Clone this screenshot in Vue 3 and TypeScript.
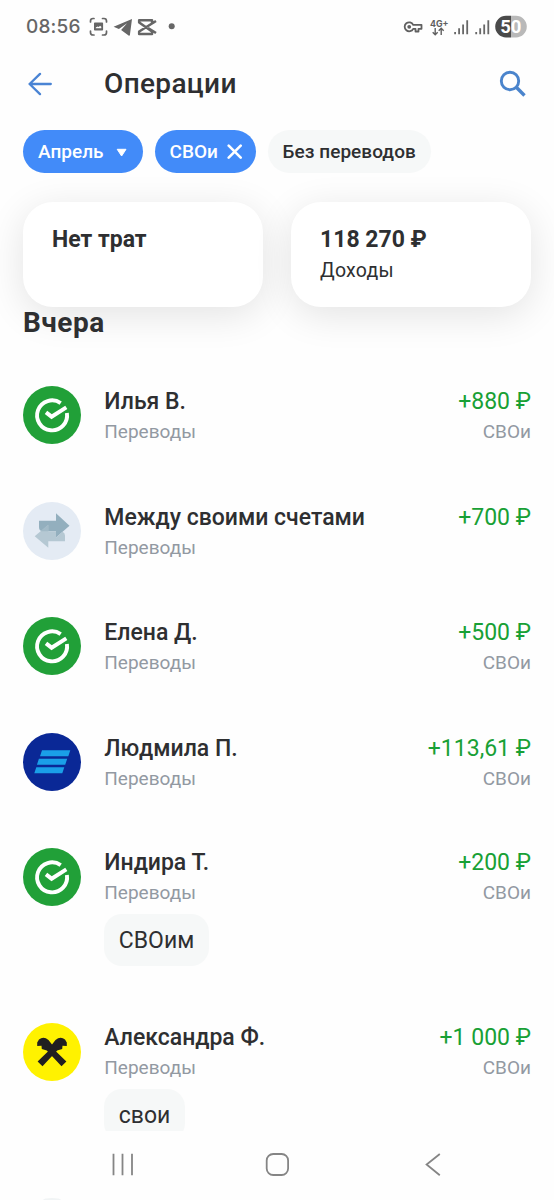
<script setup lang="ts">
type Bank = 'sber' | 'own' | 'vtb' | 'raif'

interface Operation {
  id: number
  bank: Bank
  name: string
  category: string
  amount: string
  label?: string
  note?: string
}

const operations: Operation[] = [
  { id: 1, bank: 'sber', name: 'Илья В.', category: 'Переводы', amount: '+880 ₽', label: 'СВОи' },
  { id: 2, bank: 'own', name: 'Между своими счетами', category: 'Переводы', amount: '+700 ₽' },
  { id: 3, bank: 'sber', name: 'Елена Д.', category: 'Переводы', amount: '+500 ₽', label: 'СВОи' },
  { id: 4, bank: 'vtb', name: 'Людмила П.', category: 'Переводы', amount: '+113,61 ₽', label: 'СВОи' },
  { id: 5, bank: 'sber', name: 'Индира Т.', category: 'Переводы', amount: '+200 ₽', label: 'СВОи', note: 'СВОим' },
  { id: 6, bank: 'raif', name: 'Александра Ф.', category: 'Переводы', amount: '+1 000 ₽', label: 'СВОи', note: 'свои' },
]
</script>

<template>
  <div class="screen">
    <div class="status">
      <span class="time">08:56</span>
      <svg class="status-left" width="90" height="22" viewBox="0 0 90 22">
        <g fill="none" stroke="#666" stroke-width="1.7" stroke-linecap="round">
          <path d="M1.5 6V5q0-2.500 2.500-2.500h1M13.500 2.500h1.500q2.500 0 2.500 2.500v1M17.500 15v1.500q0 2.500-2.500 2.500h-1.500M5 19H4q-2.500 0-2.500-2.500V15" />
        </g>
        <path fill="#666" fill-rule="evenodd" d="M5.800 6.500h7.500q.8 0 .8.8v6.400q0 .8-.8.8H5.800q-.8 0-.8-.8V7.300q0-.8.8-.8zM6.800 12.300h5.500v-1.500l-1.300-1-1.200 1.300-1.200-.6-1.800 1z" />
        <path fill="#666" d="M43 3 24.600 10.800l5.300 2.100 8.200-5.600-6 6.600 7.500 5.600q1 .6 1.300-.6z" />
        <path fill="none" stroke="#666" stroke-width="2.600" stroke-linejoin="round" d="M67 5 50.200 15.500V18H63V15.500L50.200 6.500V4.300H63V6.500M59 12l8 5" />
        <circle cx="82.700" cy="10.300" r="3" fill="#666" />
      </svg>
      <svg class="status-right" width="126" height="24" viewBox="0 0 126 24">
        <g fill="none" stroke="#606060" stroke-width="1.800" stroke-linejoin="round">
          <path d="M11.200 9.800A4.500 4.500 0 1 0 11.200 13.800H13.500V16.500H16.500V13.800H19.500V9.800z" />
          <circle cx="7.200" cy="11.800" r="1" />
        </g>
        <text x="28" y="11.500" class="net">4G+</text>
        <path fill="none" stroke="#606060" stroke-width="1.400" d="M33.200 13v6.500M30.700 17.200l2.500 2.500 2.500-2.500M39.200 20V13.500M36.700 15.800l2.500-2.500 2.500 2.500" />
        <g fill="#686868">
          <path d="M52.200 17H54v2.200h-1.800zM56.200 13.200H58v6h-1.800zM60.200 9.500H62v9.700h-1.800zM64.300 5.200h1.800v14h-1.800z" />
          <path d="M73.300 17h1.800v2.200h-1.800zM77.300 13.200h1.800v6h-1.800zM81.300 9.500h1.800v9.700h-1.800zM85.400 5.200h1.800v14h-1.800z" />
        </g>
        <path fill="#4a4a4a" d="M109 .8h-5a10.800 10.800 0 0 0 0 21.600h5z" />
        <path fill="#b9b9b9" d="M109 .8h5a10.800 10.800 0 0 1 0 21.600h-5z" />
        <text x="108.800" y="17.800" text-anchor="middle" class="battery">50</text>
      </svg>
    </div>

    <header class="header">
      <svg class="back" width="24" height="24" viewBox="0 0 24 24">
        <path fill="none" stroke="#4a84d4" stroke-width="2.300" stroke-linecap="round" stroke-linejoin="round" d="M22.800 12H1.600M12 1.900 1.600 12 12 22.100" />
      </svg>
      <h1 class="title">Операции</h1>
      <svg class="search" width="28" height="28" viewBox="0 0 28 28">
        <circle cx="11" cy="11" r="8.700" fill="none" stroke="#4a84cc" stroke-width="2.900" />
        <path d="m17.300 17.300 8.200 8.200" fill="none" stroke="#4a84cc" stroke-width="3.400" />
      </svg>
    </header>

    <div class="chips">
      <div class="chip month">
        <span>Апрель</span>
        <svg width="12" height="10" viewBox="0 0 12 10"><path fill="#fff" stroke="#fff" stroke-linejoin="round" d="M1.200 2.300h8.800L5.600 9z" /></svg>
      </div>
      <div class="chip own">
        <span>СВОи</span>
        <svg width="16" height="16" viewBox="0 0 16 16"><path fill="none" stroke="#fff" stroke-width="2.600" stroke-linecap="round" d="m1.700 1.700 12 12M13.700 1.700l-12 12" /></svg>
      </div>
      <div class="chip plain"><span>Без переводов</span></div>
    </div>

    <div class="cards">
      <div class="card"><div class="card-value">Нет трат</div></div>
      <div class="card">
        <div class="card-value sum">118 270 ₽</div>
        <div class="card-label">Доходы</div>
      </div>
    </div>

    <main class="feed">
      <h2 class="day">Вчера</h2>
      <div v-for="op in operations" :key="op.id" class="row" :class="{ noted: op.note }">
        <svg class="avatar" width="58" height="58" viewBox="0 0 58 58">
          <template v-if="op.bank === 'sber'">
            <circle cx="29" cy="29" r="29" fill="#21a038" />
            <path fill="none" stroke="#fff" stroke-width="3.900" d="M37.700 17.100A15 15 0 1 0 43.900 27" />
            <path fill="none" stroke="#fff" stroke-width="4" d="M23 26.400 28.600 30.700 43.300 21.400" />
          </template>
          <template v-else-if="op.bank === 'own'">
            <circle cx="29" cy="29" r="29" fill="#e4ebf4" />
            <path fill="#93afbe" d="M16 18.800h17v-7.600l13.500 12.600L33 35.400v-6.200H20q-4 0-4-4z" />
            <path fill="#b5c8d3" d="M42 39.200H25.300v6.600L11.700 34.200 25.300 22.800v6.400H33v6.200l6.500-5.600q2.500 1 2.500 3.600z" />
            <path fill="#a2bac7" d="M17.800 29.200 25.300 22.800v6.400z" />
          </template>
          <template v-else-if="op.bank === 'vtb'">
            <circle cx="29" cy="29" r="29" fill="#0a2896" />
            <path fill="#1a9fe8" d="M19 17.300H47.300l-2 6H17zM15.900 25.800H44.200l-2 6H13.900zM13.300 34.300H41.300l-2 6H11.300z" />
          </template>
          <template v-else>
            <circle cx="29" cy="29" r="29" fill="#fff200" />
            <g fill="#211f20">
              <path d="M38.500 43.300 43.400 38.400 31 26.500 29 21.500 25.500 17Q20.500 12.800 16 16.500L14.200 19.500V23l4.300-.3.300 3.300 5 1.500z" />
              <path d="M19.500 43.300 14.600 38.400 27 26.500 29 21.500 32.500 17Q37.500 12.800 42 16.500L43.800 19.500V23l-4.300-.3-.3 3.300-5 1.500z" />
            </g>
          </template>
        </svg>
        <div class="info">
          <div class="name">{{ op.name }}</div>
          <div class="category">{{ op.category }}</div>
          <div v-if="op.note" class="note">{{ op.note }}</div>
        </div>
        <div class="values">
          <div class="amount">{{ op.amount }}</div>
          <div v-if="op.label" class="label">{{ op.label }}</div>
        </div>
      </div>
    </main>

    <nav class="nav">
      <svg width="24" height="24" viewBox="0 0 24 24"><path fill="none" stroke="#858585" stroke-width="1.800" d="M3.500 .8v21.500M12.500 .8v21.500M22 .8v21.500" /></svg>
      <svg width="24" height="24" viewBox="0 0 24 24"><rect x="1.700" y="1" width="21.400" height="21" rx="6.500" fill="none" stroke="#858585" stroke-width="1.800" /></svg>
      <svg width="24" height="24" viewBox="0 0 24 24"><path fill="none" stroke="#858585" stroke-width="1.800" d="M19.800 1 6.600 11.500l13.200 10.700" /></svg>
    </nav>
    <div class="peek"><i></i></div>
  </div>
</template>

<style>
body {
  margin: 0;
  background: #fefefe;
}
</style>

<style scoped>
.screen {
  width: 554px;
  height: 1200px;
  overflow: hidden;
  background: #fefefe;
  color: #2e2f31;
  font-family: Roboto, 'Liberation Sans', sans-serif;
  display: flex;
  flex-direction: column;
  box-sizing: border-box;
}
.status {
  height: 53px;
  flex: none;
  display: flex;
  align-items: center;
  padding: 0 26px 0 26px;
}
.time {
  font: 500 19px/24px Inter, Roboto, sans-serif;
  color: #666;
  width: 54px;
  letter-spacing: 0.2px;
}
.status-left {
  margin-left: 9px;
}
.status-right {
  margin-left: auto;
}
.net {
  font: 700 8.800px Inter, sans-serif;
  fill: #606060;
}
.battery {
  font: 700 18.500px Roboto, sans-serif;
  fill: #fff;
}
.header {
  height: 62px;
  flex: none;
  display: flex;
  align-items: center;
  padding: 0 27px 0 28px;
}
.title {
  margin: 0 auto 0 52px;
  font-size: 28px;
  line-height: 32px;
  font-weight: 500;
  letter-spacing: 0.350px;
}
.chips {
  flex: none;
  display: flex;
  gap: 11.500px;
  padding: 15px 0 0 23px;
}
.chip {
  box-sizing: border-box;
  height: 43px;
  border-radius: 22px;
  background: #428bf9;
  color: #fff;
  display: flex;
  align-items: center;
  justify-content: space-between;
  padding: 0 15px;
  font-size: 19px;
  font-weight: 500;
  white-space: nowrap;
}
.month {
  width: 120px;
}
.own {
  width: 101.500px;
  padding-right: 13px;
}
.plain {
  width: 163px;
  background: #f6f8f8;
  color: #2e2f31;
  letter-spacing: 0.050px;
}
.cards {
  flex: none;
  display: flex;
  gap: 28px;
  padding: 29px 23px 0;
}
.card {
  box-sizing: border-box;
  flex: 1;
  height: 105px;
  padding: 23px 29px;
  border-radius: 30px;
  background: #fff;
  box-shadow: 0 8px 38px rgba(0, 0, 0, 0.11);
}
.card-value {
  font-size: 23px;
  line-height: 30px;
  font-weight: 700;
}
.card-label {
  font-size: 19.500px;
  line-height: 31px;
  letter-spacing: 0.250px;
}
.feed {
  flex: none;
  height: 824px;
  overflow: hidden;
  padding: 0 23px;
  position: relative;
}
.day {
  margin: 0 0 47px;
  font-size: 28px;
  line-height: 32px;
  font-weight: 700;
  letter-spacing: 0.500px;
}
.row {
  display: flex;
  height: 115.500px;
}
.row.noted {
  height: 175px;
}
.avatar {
  flex: none;
}
.info {
  margin-left: 23.300px;
  padding-top: 1px;
}
.values {
  margin-left: auto;
  padding-top: 1px;
  text-align: right;
}
.noted .info,
.noted .values {
  padding-top: 0;
}
.noted:nth-of-type(5) .info,
.noted:nth-of-type(5) .values {
  margin-top: -0.500px;
}
.name,
.amount {
  font-size: 23px;
  line-height: 30px;
  white-space: nowrap;
}
.name {
  font-weight: 500;
}
.amount {
  color: #18a035;
}
.category,
.label {
  font-size: 19px;
  line-height: 29.500px;
  color: #9299a2;
}
.note {
  box-sizing: border-box;
  width: fit-content;
  height: 52px;
  margin-top: 6.500px;
  padding: 0 14.500px;
  border-radius: 18px;
  background: #f6f8f8;
  font-size: 23px;
  line-height: 53px;
}
.nav {
  flex: none;
  height: 67px;
  display: flex;
  align-items: center;
  justify-content: space-between;
  padding: 0 110px;
}
.peek {
  flex: none;
  height: 2px;
  overflow: hidden;
  padding-left: 23px;
}
.peek i {
  display: block;
  width: 18px;
  height: 4px;
  margin-left: 20px;
  border-radius: 50% 50% 0 0;
  background: #f1f4f5;
}
</style>
